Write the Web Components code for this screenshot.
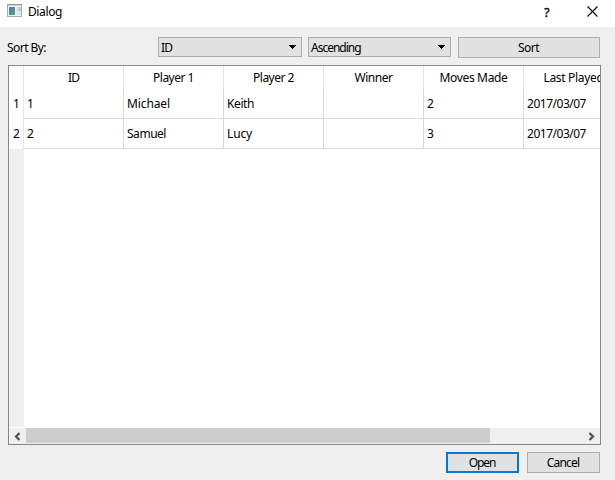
<!DOCTYPE html>
<html lang="en">
<head>
<meta charset="utf-8">
<title>Dialog</title>
<style>html,body{margin:0;height:100%;overflow:hidden;background:#efefef}</style>
</head>
<body>
<dialog-window></dialog-window>
<script>
// Text set to a given advance width through letter spacing.
class UiText extends HTMLElement {
  connectedCallback() {
    const value = this.getAttribute('value');
    const root = this.attachShadow({mode: 'open'});
    root.innerHTML = `<style>:host{display:block;white-space:pre;line-height:16px;flex:none}span{display:inline-block}</style><span></span>`;
    const span = root.querySelector('span');
    span.textContent = value;
    const target = Number(this.getAttribute('w'));
    if (target) {
      const natural = span.getBoundingClientRect().width;
      span.style.letterSpacing = ((target - natural) / value.length) + 'px';
    }
  }
}
customElements.define('ui-text', UiText);

class UiButton extends HTMLElement {
  constructor() {
    super();
    this.attachShadow({mode: 'open'}).innerHTML = `<style>
      :host{display:flex;align-items:center;justify-content:center;box-sizing:border-box;height:21px;border:1px solid #adadad;background:#e1e1e1;padding:1px 1px 0 0}
      :host([default]){border:2px solid #0078d7}
    </style><slot></slot>`;
  }
}
customElements.define('ui-button', UiButton);

class UiSelect extends HTMLElement {
  constructor() {
    super();
    this.attachShadow({mode: 'open'}).innerHTML = `<style>
      :host{display:flex;align-items:center;justify-content:space-between;box-sizing:border-box;height:20px;border:1px solid #adadad;background:#e1e1e1;padding:1px 5px 0 2px}
      svg{display:block;margin-top:-1px}
    </style><slot></slot><svg width="7" height="4" shape-rendering="crispEdges"><path d="M0 0h7v1h-1v1h-1v1h-1v1h-1v-1h-1v-1h-1v-1h-1z"/></svg>`;
  }
}
customElements.define('ui-select', UiSelect);

class TitleBar extends HTMLElement {
  constructor() {
    super();
    this.attachShadow({mode: 'open'}).innerHTML = `<style>
      :host{display:flex;box-sizing:border-box;height:27px;background:#fff;padding:4px 17px 0 7px}
      svg{display:block;flex:none}
      ui-text{margin-left:6px}
      .help{margin-left:auto;width:8px;font-size:13px;-webkit-text-stroke:.3px #000}
      .close{margin:2px 0 0 35px}
    </style>
    <svg width="15" height="14"><defs><linearGradient id="g" x2="1" y2="1"><stop stop-color="#4778b0"/><stop offset="1" stop-color="#55ac80"/></linearGradient></defs>
      <rect x=".5" y=".5" width="14" height="12" fill="#f2f3f5" stroke="#a9abae"/><path d="M0 .5h15" stroke="#969a9f"/><path d="M1 1.500h13" stroke="#cdd1d5"/><rect x="2" y="3" width="6" height="8" fill="url(#g)"/><rect x="9" y="3" width="2" height="8" fill="#e4e7ee"/><rect x="11" y="3" width="3" height="4" fill="#b9d3cc"/><rect x="11" y="7" width="3" height="4" fill="#e0e6ea"/></svg>
    <ui-text value="Dialog" w="34"></ui-text>
    <ui-text class="help" value="?"></ui-text>
    <svg class="close" width="11" height="11"><path d="M.5 .5l10 10M10.500 .5l-10 10" stroke="#000" stroke-width="1.1"/></svg>`;
  }
}
customElements.define('title-bar', TitleBar);

class GameTable extends HTMLElement {
  constructor() {
    super();
    const heads = [['ID',11],['Player 1',41],['Player 2',41],['Winner',38],['Moves Made',68],['Last Played',60]];
    const rows = [[['1'],['Michael',43],['Keith',27],null,['2'],['2017/03/07',59]],
                  [['2'],['Samuel',39],['Lucy',25],null,['3'],['2017/03/07',59]]];
    const text = t => t ? `<ui-text value="${t[0]}" w="${t[1] || 6.5}"></ui-text>` : '';
    this.attachShadow({mode: 'open'}).innerHTML = `<style>
      :host{display:flex;flex-direction:column;box-sizing:border-box;width:593px;height:380px;border:1px solid #828790;background:#fff;overflow:hidden}
      .body{display:flex;height:361px;flex:none}
      .side{display:grid;grid-template-rows:23px 30px 30px 1fr;width:15px;flex:none}
      .side>*{background:#fff;border-right:1px solid #e5e5e5;display:flex;align-items:center;padding-left:4px;box-sizing:border-box}
      .side>:last-child{background:#efefef;border-color:#efefef}
      .grid{display:grid;grid-template-columns:repeat(6,100px);grid-template-rows:23px 30px 30px;flex:none}
      .grid>*{box-sizing:border-box;display:flex;align-items:center;border-right:1px solid #d8d8d8}
      .head{justify-content:center;border-color:#e5e5e5;padding-top:1px}
      .cell{border-bottom:1px solid #d8d8d8;padding:1px 0 0 3px}
      .bar{display:flex;align-items:center;height:16px;margin-top:1px;background:#efefef;flex:none}
      .thumb{width:464px;height:15px;background:#cdcdcd;align-self:flex-start}
      .bar svg{flex:none}
    </style>
    <div class="body"><div class="side"><div></div><div>${text(['1'])}</div><div>${text(['2'])}</div><div></div></div>
    <div class="grid">${heads.map(h => `<div class="head">${text(h)}</div>`).join('')}${rows.flat().map(c => `<div class="cell">${text(c)}</div>`).join('')}</div></div>
    <div class="bar"><svg width="17" height="15"><path d="M10.500 4L7 7.500l3.500 3.500" fill="none" stroke="#505050" stroke-width="2.200"/></svg><div class="thumb"></div>
    <svg width="16" height="15" style="margin-left:auto"><path d="M5.500 4L9 7.500l-3.500 3.500" fill="none" stroke="#505050" stroke-width="2.200"/></svg></div>`;
  }
}
customElements.define('game-table', GameTable);

class DialogWindow extends HTMLElement {
  constructor() {
    super();
    this.attachShadow({mode: 'open'}).innerHTML = `<style>
      :host{display:flex;flex-direction:column;width:615px;height:480px;background:#efefef;color:#000;font:12px "Noto Sans","Open Sans",sans-serif}
      .tools{display:grid;grid-template-columns:145px 144px 143px 142px;column-gap:6px;height:28px;padding:10px 0 0 7px;align-items:start}
      .tools ui-button{margin-left:1px;margin-right:-1px}
      .label{margin-top:3px}
      game-table{margin-left:8px}
      .actions{display:flex;gap:8px;justify-content:flex-end;padding:7px 15px 0}
      .actions ui-button{width:73px}
    </style>
    <title-bar></title-bar>
    <div class="tools"><ui-text class="label" value="Sort By:" w="39"></ui-text><ui-select><ui-text value="ID" w="11"></ui-text></ui-select><ui-select><ui-text value="Ascending" w="49.5"></ui-text></ui-select><ui-button><ui-text value="Sort" w="21"></ui-text></ui-button></div>
    <game-table></game-table>
    <div class="actions"><ui-button default><ui-text value="Open" w="26.5"></ui-text></ui-button><ui-button><ui-text value="Cancel" w="32.5"></ui-text></ui-button></div>`;
  }
}
customElements.define('dialog-window', DialogWindow);
</script>
</body>
</html>
